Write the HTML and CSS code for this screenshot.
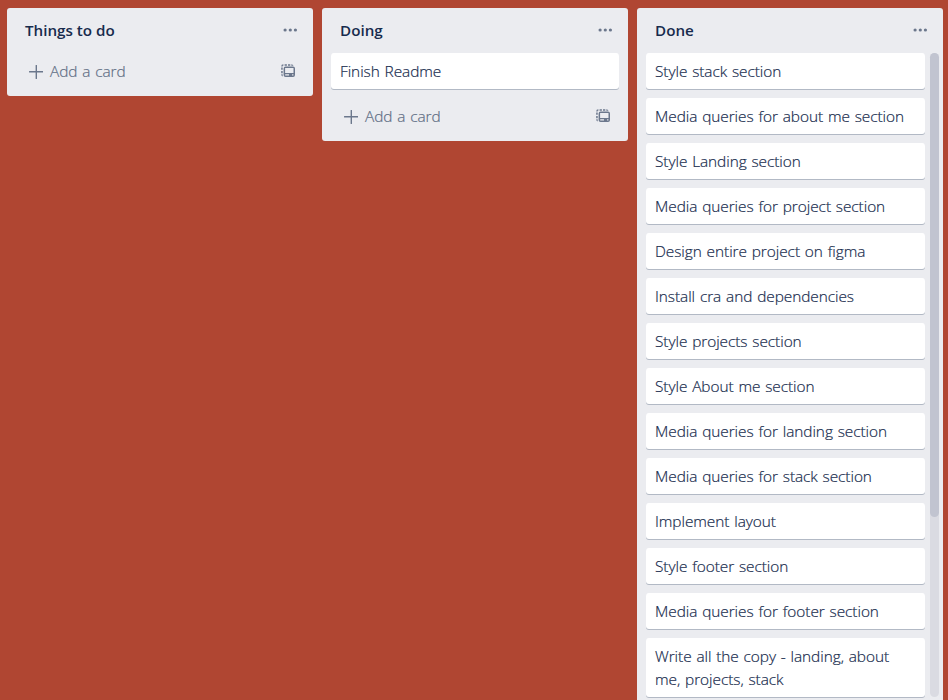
FILE: index.html
```html
<!DOCTYPE html>
<html lang="en">
<head>
<meta charset="utf-8">
<title>Board</title>
<link rel="stylesheet" href="styles.css">
</head>
<body>
<svg class="defs" aria-hidden="true">
  <symbol id="dots" viewBox="0 0 14 4"><circle cx="2.1" cy="2" r="1.6"/><circle cx="7.3" cy="2" r="1.6"/><circle cx="12.4" cy="2" r="1.6"/></symbol>
  <symbol id="plus" viewBox="0 0 14 14"><path d="M7.3 .5v13M.6 6.7h13.2" fill="none" stroke="currentColor" stroke-width="1.4" stroke-linecap="round"/></symbol>
  <symbol id="template" viewBox="0 0 14 14"><path d="M.2 2.4Q.2.2 2.4.2V1.7H1.7V2.4ZM3.6.2h2.3v1.5H3.6ZM7 .2h2.3v1.5H7ZM10.3.2Q12.2.2 12.5 1.7H10.3ZM.2 3.6h1.5v2.2H.2ZM.2 7h1.5v2.2H.2ZM.2 10.3h1.5v2.2Q.2 12.2.2 10.3Z"/><path fill-rule="evenodd" d="M4.6 2.6h7.4q2 0 2 2v6.4q0 2-2 2H4.6q-2 0-2-2V4.6q0-2 2-2ZM4.1 4.1v4.8h8.4V4.1ZM4.2 10.2v1.4h3.8v-1.4ZM11.1 10.2v1.4h1.3v-1.4Z"/></symbol>
</svg>
<main class="board">
  <section class="list">
    <header class="list-header"><h2>Things to do</h2><svg class="dots"><use href="#dots"/></svg></header>
    <footer class="composer"><svg class="plus"><use href="#plus"/></svg><span class="add">Add a card</span><svg class="template"><use href="#template"/></svg></footer>
  </section>
  <section class="list">
    <header class="list-header"><h2>Doing</h2><svg class="dots"><use href="#dots"/></svg></header>
    <div class="cards"><article class="card">Finish Readme</article></div>
    <footer class="composer"><svg class="plus"><use href="#plus"/></svg><span class="add">Add a card</span><svg class="template"><use href="#template"/></svg></footer>
  </section>
  <section class="list list-full">
    <header class="list-header"><h2>Done</h2><svg class="dots"><use href="#dots"/></svg></header>
    <div class="scroll-area">
      <div class="cards">
        <article class="card">Style stack section</article>
        <article class="card">Media queries for about me section</article>
        <article class="card">Style Landing section</article>
        <article class="card">Media queries for project section</article>
        <article class="card">Design entire project on figma</article>
        <article class="card">Install cra and dependencies</article>
        <article class="card">Style projects section</article>
        <article class="card">Style About me section</article>
        <article class="card">Media queries for landing section</article>
        <article class="card">Media queries for stack section</article>
        <article class="card">Implement layout</article>
        <article class="card">Style footer section</article>
        <article class="card">Media queries for footer section</article>
        <article class="card">Write all the copy - landing, about<br>me, projects, stack</article>
      </div>
      <div class="track"><div class="thumb"></div></div>
    </div>
  </section>
</main>
</body>
</html>
```
FILE: styles.css
```css
* { box-sizing: border-box; }
body {
  margin: 0;
  height: 700px;
  overflow: hidden;
  background: #b04632;
  color: #172b4d;
  font: 300 15.4px/23px "Segoe UI", "Open Sans", "Noto Sans", sans-serif;
  letter-spacing: -.05px;
  word-spacing: .9px;
}
.defs { position: absolute; width: 0; height: 0; }
svg { display: block; flex: none; fill: currentColor; color: #6b778c; }
.board {
  display: flex;
  align-items: flex-start;
  gap: 9px;
  padding: 8px 5px 0 7px;
}
.list {
  flex: none;
  width: 306px;
  background: #ebecf0;
  border-radius: 3px;
}
.list-full { height: 692px; border-radius: 3px 3px 0 0; }
.list-header {
  display: flex;
  align-items: center;
  justify-content: space-between;
  height: 45px;
  padding: 0 16px 0 18px;
}
h2 { margin: 0; font-size: 15.2px; line-height: 23px; font-weight: 600; letter-spacing: 0; word-spacing: 0; }
.dots { width: 14px; height: 4px; margin-bottom: 1px; }
.cards {
  display: flex;
  flex-direction: column;
  gap: 9px;
  padding: 0 9px;
}
.card, .add { -webkit-text-stroke: .2px currentColor; }
.card {
  padding: 7px 9px 6px;
  background: #fff;
  border-radius: 3px;
  box-shadow: 0 1px 0 rgba(9, 30, 66, .25);
}
.composer {
  display: flex;
  align-items: center;
  height: 43px;
  padding: 0 18px 6px 22px;
}
.cards + .composer { height: 52px; padding-top: 9px; }
.plus { width: 14px; height: 14px; }
.add { margin-left: 7px; color: #5e6c84; }
.template { width: 14px; height: 14px; margin: 0 0 1px auto; }
.scroll-area { display: flex; }
.scroll-area .cards { width: 293px; padding-right: 5px; }
.track {
  width: 9px;
  height: 644px;
  border-radius: 5px;
  background: #dadbe2;
}
.thumb { height: 464px; border-radius: 5px; background: #c1c4d0; }
```
